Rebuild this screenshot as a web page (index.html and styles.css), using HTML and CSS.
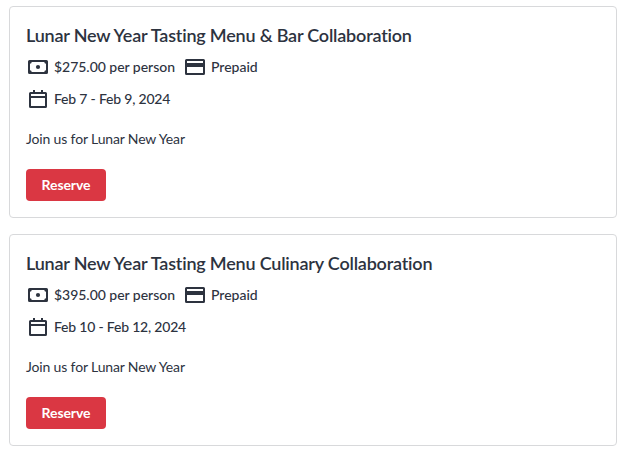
FILE: index.html
```html
<!DOCTYPE html>
<html lang="en">
<head>
    <meta charset="UTF-8">
    <meta name="viewport" content="width=device-width, initial-scale=1.0">
    <title>Experiences</title>
    <link rel="stylesheet" href="styles.css">
</head>
<body>

    <!-- Shared icons -->
    <svg class="icon-defs" aria-hidden="true">
        <symbol id="icon-cash" viewBox="0 0 24 24">
            <path fill-rule="evenodd" d="M3.500 5h17A1.500 1.500 0 0 1 22 6.500v11a1.500 1.500 0 0 1-1.500 1.500h-17A1.500 1.500 0 0 1 2 17.500v-11A1.500 1.500 0 0 1 3.500 5zM5.700 7a1.700 1.700 0 0 1-1.700 1.700v6.600a1.700 1.700 0 0 1 1.700 1.700h12.600a1.700 1.700 0 0 1 1.700-1.700V8.700a1.700 1.700 0 0 1-1.700-1.700z"/>
            <circle cx="12" cy="12" r="2.100"/>
        </symbol>
        <symbol id="icon-card" viewBox="0 0 24 24">
            <path fill-rule="evenodd" d="M3.500 4h17A1.500 1.500 0 0 1 22 5.500v13a1.500 1.500 0 0 1-1.500 1.500h-17A1.500 1.500 0 0 1 2 18.500v-13A1.500 1.500 0 0 1 3.500 4zM4 6v2h16V6zM4 12v6h16v-6z"/>
        </symbol>
        <symbol id="icon-calendar" viewBox="0 0 24 24">
            <path fill-rule="evenodd" d="M7 3h2v2h6V3h2v2h2.500A1.500 1.500 0 0 1 21 6.500v13a1.500 1.500 0 0 1-1.500 1.500h-15A1.500 1.500 0 0 1 3 19.500v-13A1.500 1.500 0 0 1 4.500 5H7zM5 7v2h14V7zM5 11v8h14v-8z"/>
        </symbol>
    </svg>

    <div class="experience">
        <h3 class="title">Lunar New Year Tasting Menu &amp; Bar Collaboration</h3>
        <div class="details">
            <span class="detail"><svg class="icon"><use href="#icon-cash"/></svg><span class="price">$275.00 per person</span></span>
            <span class="detail"><svg class="icon"><use href="#icon-card"/></svg><span class="prepaid">Prepaid</span></span>
        </div>
        <div class="details">
            <span class="detail"><svg class="icon"><use href="#icon-calendar"/></svg><span class="dates">Feb 7 - Feb 9, 2024</span></span>
        </div>
        <p class="description">Join us for Lunar New Year</p>
        <button class="reserve" type="button">Reserve</button>
    </div>

    <div class="experience">
        <h3 class="title">Lunar New Year Tasting Menu Culinary Collaboration</h3>
        <div class="details">
            <span class="detail"><svg class="icon"><use href="#icon-cash"/></svg><span class="price">$395.00 per person</span></span>
            <span class="detail"><svg class="icon"><use href="#icon-card"/></svg><span class="prepaid">Prepaid</span></span>
        </div>
        <div class="details">
            <span class="detail"><svg class="icon"><use href="#icon-calendar"/></svg><span class="dates">Feb 10 - Feb 12, 2024</span></span>
        </div>
        <p class="description">Join us for Lunar New Year</p>
        <button class="reserve" type="button">Reserve</button>
    </div>

</body>
</html>
```
FILE: styles.css
```css
* {
    margin: 0;
    padding: 0;
    box-sizing: border-box;
}

body {
    font-family: Lato, 'Open Sans', sans-serif;
    background-color: #ffffff;
    color: #2d333f;
    padding: 6px 10px 0 9px;
    display: flex;
    flex-direction: column;
    gap: 16px;
}

.icon-defs {
    display: none;
}

.experience {
    height: 212px;
    padding: 16px;
    border: 1px solid #d8d9db;
    border-radius: 4px;
}

.title {
    font-size: 18px;
    font-weight: 600;
    line-height: 24px;
    letter-spacing: -0.2px;
    white-space: nowrap;
}

.details {
    display: flex;
    gap: 8px;
    margin-top: 8px;
}

.detail {
    display: flex;
    align-items: center;
    gap: 4px;
    font-size: 14px;
    font-weight: 500;
    line-height: 24px;
}

.price {
    letter-spacing: -0.03px;
}

.dates {
    letter-spacing: -0.2px;
}

.icon {
    width: 24px;
    height: 24px;
    fill: #2d333f;
}

.description {
    margin: 16px 0 18px;
    font-size: 14px;
    font-weight: 400;
    line-height: 24px;
    letter-spacing: -0.15px;
}

.reserve {
    display: block;
    width: 80px;
    height: 32px;
    border: none;
    border-radius: 4px;
    background-color: #da3743;
    color: #ffffff;
    font-family: inherit;
    font-size: 14px;
    font-weight: 700;
    line-height: 32px;
    letter-spacing: -0.1px;
}
```
